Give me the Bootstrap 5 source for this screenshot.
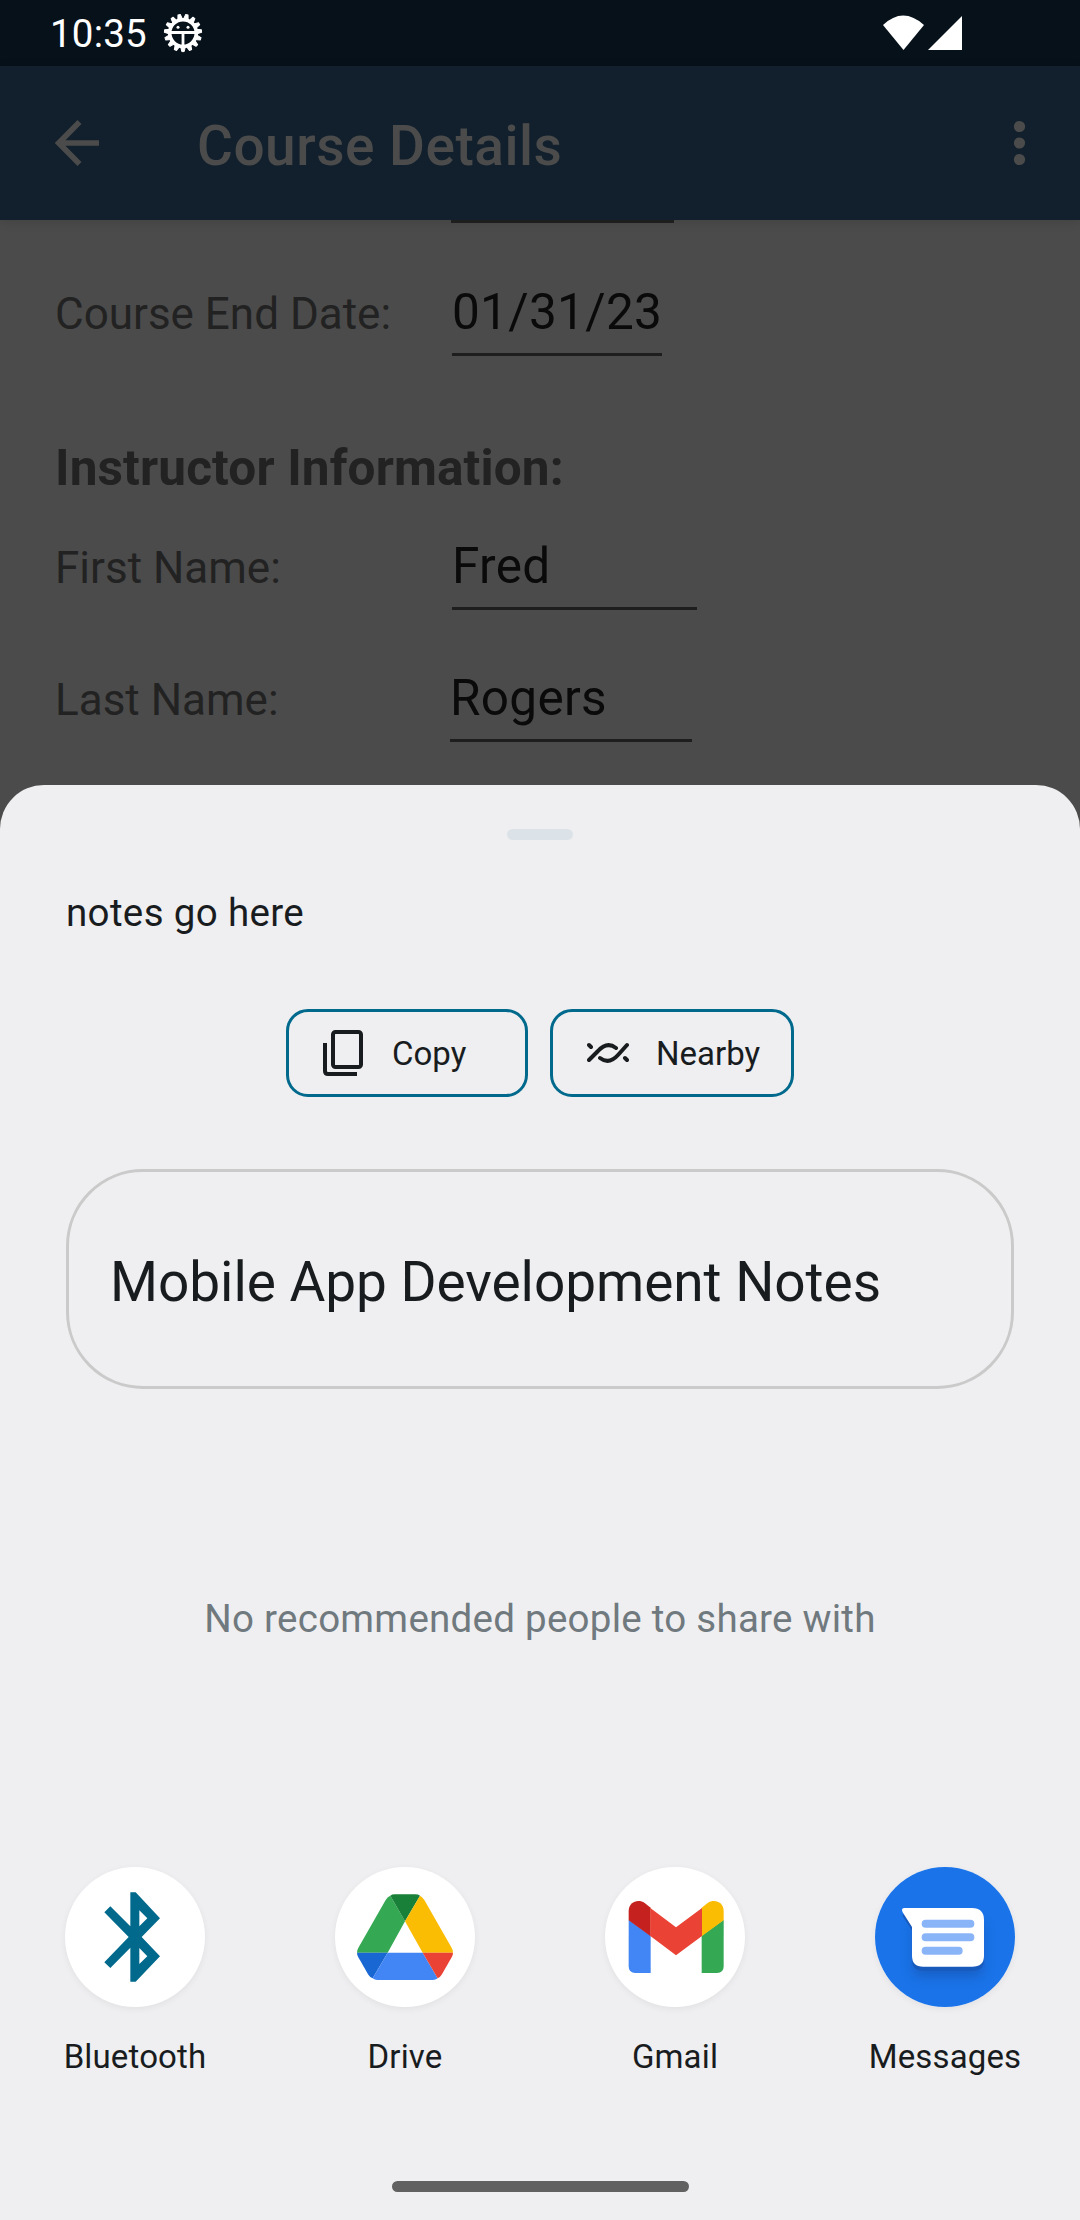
<!DOCTYPE html>
<html lang="en">
<head>
<meta charset="utf-8">
<meta name="viewport" content="width=device-width, initial-scale=1">
<title>Course Details</title>
<link href="https://cdn.jsdelivr.net/npm/bootstrap@5.3.0/dist/css/bootstrap.min.css" rel="stylesheet">
<style>
  body { font-family: Roboto, sans-serif; background: #4b4b4b; color: #191c1e; }
  svg { display: block; flex: none; }
  .screen { width: 1080px; height: 2220px; }
  .statusbar { height: 66px; background: #07111a; padding: 0 117px 0 50px; }
  .clock { font-size: 38.5px; line-height: 46px; letter-spacing: .2px; padding-top: 2px; }
  .appbar { height: 154px; background: #11202c; color: #4b4b4b; padding: 0 44px 0 55px; box-shadow: 0 2px 10px rgba(0,0,0,.12); }
  .appbar-title { font-size: 55px; line-height: 64px; font-weight: 500; letter-spacing: .5px; margin-left: 97px; padding-top: 6px; }
  .form-area { height: 565px; padding-left: 55px; color: #222; }
  .stub-line { width: 223px; height: 3px; margin-left: 396px; background: #1e1e1e; }
  .field { height: 132px; }
  .field-first { height: 133px; }
  .field-top { height: 113px; }
  .field-label { width: 397px; font-size: 44px; line-height: 58px; padding-bottom: 13px; }
  .label-narrow { width: 395px; }
  .field-value { font-size: 49.5px; line-height: 58px; color: #0a0a0a; letter-spacing: .3px; border-bottom: 3px solid #1e1e1e; padding-bottom: 12px; }
  .section-title { font-size: 49.5px; line-height: 58px; font-weight: 700; letter-spacing: .15px; margin-top: 83px; }
  .sheet { height: 1435px; background: #efeff1; border-radius: 44px 44px 0 0; padding-top: 44px; }
  .handle { width: 66px; height: 11px; border-radius: 5.5px; background: #dce3e8; }
  .preview { font-size: 38.5px; line-height: 46px; letter-spacing: .35px; margin: 50px 66px 0; }
  .actions { margin-top: 73px; gap: 22px; }
  .chip { height: 88px; border: 3px solid #00698c; border-radius: 22px; font-size: 33px; color: #191c1e; }
  .chip span { padding-top: 2px; }
  .target { height: 220px; margin: 72px 66px 0; border: 3px solid #cacacb; border-radius: 77px; padding: 6px 0 0 41px; font-size: 55px; letter-spacing: -.06px; }
  .empty-note { font-size: 38.5px; line-height: 46px; letter-spacing: .26px; margin-top: 207px; color: #6f797e; }
  .apps { margin-top: 225px; }
  .app-icon { width: 140px; height: 140px; background: #fff; box-shadow: 0 2px 7px rgba(0,0,0,.06); }
  .app-name { font-size: 33px; line-height: 40px; letter-spacing: .15px; margin-top: 30px; }
  .home-pill { width: 297px; height: 11px; border-radius: 6px; background: #616162; margin-top: 104px; }
</style>
</head>
<body>
<main class="screen d-flex flex-column overflow-hidden">
  <div class="statusbar d-flex align-items-center text-white">
    <span class="clock">10:35</span>
    <svg class="ms-3" width="40" height="40" viewBox="-20 -20 40 40" id="gear"></svg>
    <svg class="ms-auto" width="80" height="38" viewBox="0 0 80 38" fill="#fff">
      <path d="M0 11Q20-8 41 11L20.500 36Z"/><path d="M45 36L79 2V36Z"/>
    </svg>
  </div>
  <nav class="appbar d-flex align-items-center">
    <svg width="45" height="46" viewBox="0 0 45 46" fill="none" stroke="#4b4b4b" stroke-width="5.600"><path d="M44 23H4M24.500 2L3.800 23L24.500 44"/></svg>
    <span class="appbar-title">Course Details</span>
    <svg class="ms-auto" width="34" height="46" viewBox="0 0 34 46" fill="#4b4b4b"><circle cx="17.500" cy="6.500" r="5.600"/><circle cx="17.500" cy="23" r="5.600"/><circle cx="17.500" cy="39.500" r="5.600"/></svg>
  </nav>
  <section class="form-area">
    <div class="stub-line"></div>
    <div class="field field-first d-flex align-items-end"><span class="field-label">Course End Date:</span><span class="field-value" style="width:210px">01/31/23</span></div>
    <div class="section-title">Instructor Information:</div>
    <div class="field field-top d-flex align-items-end"><span class="field-label">First Name:</span><span class="field-value" style="width:245px">Fred</span></div>
    <div class="field d-flex align-items-end"><span class="field-label label-narrow">Last Name:</span><span class="field-value" style="width:242px">Rogers</span></div>
  </section>
  <section class="sheet">
    <div class="handle mx-auto"></div>
    <div class="preview">notes go here</div>
    <div class="actions d-flex justify-content-center">
      <button class="chip btn p-0 d-flex align-items-center" style="width:242px">
        <svg style="margin-left:34px" width="41" height="48" viewBox="0 0 41 48" fill="none" stroke="#191c1e" stroke-width="4"><rect x="10" y="3" width="28" height="35" rx="2.500"/><path d="M2 14V42Q2 45 5 45H34"/></svg>
        <span style="margin-left:28px">Copy</span>
      </button>
      <button class="chip btn p-0 d-flex align-items-center" style="width:244px">
        <svg style="margin-left:34px" width="42" height="22" viewBox="0 0 42 22" fill="none" stroke="#191c1e" stroke-width="4" stroke-linecap="round"><path d="M2 18L11 9Q20-1 29 6M13 16Q22 23 31 13L40 3M2 3L4 5M40 18L38 16"/></svg>
        <span style="margin-left:27px">Nearby</span>
      </button>
    </div>
    <div class="target d-flex align-items-center">Mobile App Development Notes</div>
    <div class="empty-note text-center">No recommended people to share with</div>
    <div class="apps row g-0 text-center">
      <div class="col-3">
        <div class="app-icon rounded-circle mx-auto"><svg width="140" height="140" viewBox="0 0 420 420"><path fill="#00698c" fill-rule="evenodd" d="M196 76H212L285 154L230 210L285 268L212 344H196V242L136 303L118 286L191 210L118 136L136 118L196 178ZM223 130V178L247 154ZM223 243V291L247 268Z"/></svg></div>
        <div class="app-name">Bluetooth</div>
      </div>
      <div class="col-3">
        <div class="app-icon rounded-circle mx-auto"><svg width="140" height="140" viewBox="0 0 420 420">
          <path fill="#35a853" d="M166 86L210 163L158 257H66Q66 249 71 241L152 99Q158 89 166 86Z"/>
          <path fill="#188038" d="M166 86Q170 82 180 82H240Q250 82 255 86L210 163Z"/>
          <path fill="#fbbc04" d="M255 86Q262 90 268 99L349 241Q354 249 354 257H263L210 163Z"/>
          <path fill="#1967d2" d="M66 257H158L113 334Q106 332 100 323L70 271Q66 264 66 257Z"/>
          <path fill="#4285f4" d="M158 257H263L308 334Q302 339 294 339H127Q119 339 113 334Z"/>
          <path fill="#ea4335" d="M263 257H354Q354 264 350 271L320 323Q314 332 308 334Z"/></svg></div>
        <div class="app-name">Drive</div>
      </div>
      <div class="col-3">
        <div class="app-icon rounded-circle mx-auto"><svg width="140" height="140" viewBox="0 0 420 420">
          <path fill="#4285f4" d="M71 158L137 206V318H91Q71 318 71 298Z"/>
          <path fill="#34a853" d="M290 206L356 158V298Q356 318 336 318H290Z"/>
          <path fill="#c5221f" d="M71 160V132C71 104 100 95 119 108L137 122V208Z"/>
          <path fill="#fbbc04" d="M356 160V132C356 104 327 95 308 108L290 122V208Z"/>
          <path fill="#ea4335" d="M136 123L213 181L291 123V207L213 265L136 207Z"/></svg></div>
        <div class="app-name">Gmail</div>
      </div>
      <div class="col-3">
        <div class="app-icon rounded-circle mx-auto"><svg width="140" height="140" viewBox="0 0 420 420">
          <defs><filter id="soft" x="-30%" y="-30%" width="160%" height="180%"><feGaussianBlur stdDeviation="16"/></filter></defs>
          <circle cx="210" cy="210" r="210" fill="#1a73e8"/>
          <path fill="#174ea6" opacity=".5" filter="url(#soft)" d="M112 170H326V300Q326 330 296 330H142Q112 330 112 300Z"/>
          <path fill="#185abc" d="M90 136H296Q327 136 327 166V280Q327 311 296 311H142Q111 311 111 280V190L82 146Z"/>
          <path fill="#fff" d="M89 123H291Q327 123 327 159V266Q327 299 291 299H145Q111 299 111 266V180L83 136Q77 123 89 123Z"/>
          <g fill="#8ab4f8"><rect x="140" y="158" width="158" height="24" rx="12"/><rect x="140" y="199" width="158" height="24" rx="12"/><rect x="140" y="239" width="123" height="24" rx="12"/></g></svg></div>
        <div class="app-name">Messages</div>
      </div>
    </div>
    <div class="home-pill mx-auto"></div>
  </section>
</main>
<script src="https://cdn.jsdelivr.net/npm/bootstrap@5.3.0/dist/js/bootstrap.bundle.min.js"></script>
<script>
  // Gear-shaped notification icon: a toothed ring round a small face and a T bar
  const teeth = Array.from({length: 15}, (_, i) =>
    `<path fill="#fff" stroke="#fff" stroke-linejoin="round" transform="rotate(${12 + i * 24})" d="M-2.500 -13L-1.200 -18.600H1.200L2.500 -13Z"/>`).join('');
  document.getElementById('gear').innerHTML = teeth +
    '<g fill="none" stroke="#fff"><circle r="13.300" stroke-width="3.600"/><path stroke-width="2.800" d="M-13 -.500H13M0 0V14"/></g>' +
    '<circle cx="-5" cy="-5.800" r="1.500" fill="#fff"/><circle cx="5" cy="-5.800" r="1.500" fill="#fff"/>';
</script>
</body>
</html>
